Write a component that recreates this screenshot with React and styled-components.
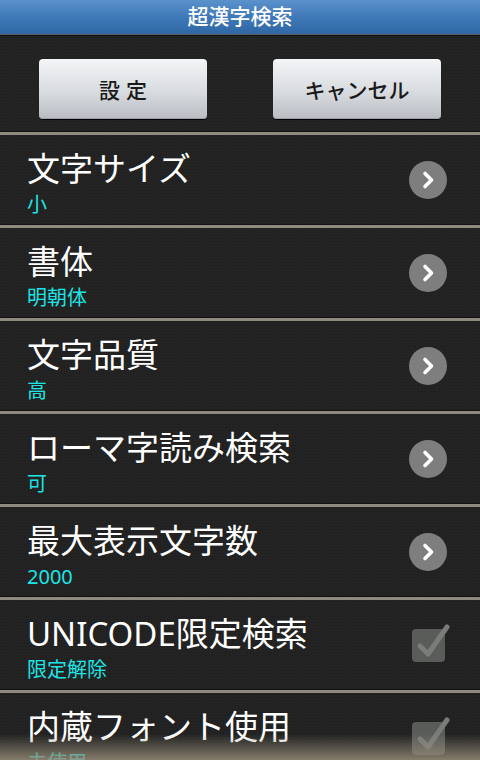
import styled, { createGlobalStyle } from "styled-components";

const GlobalStyle = createGlobalStyle`
  html, body {
    margin: 0;
    padding: 0;
    background: #1f201f;
  }
  body {
    font-family: "Noto Sans", "Noto Sans CJK JP", sans-serif;
  }
`;

const items = [
  { title: "文字サイズ", value: "小", kind: "arrow" },
  { title: "書体", value: "明朝体", kind: "arrow" },
  { title: "文字品質", value: "高", kind: "arrow" },
  { title: "ローマ字読み検索", value: "可", kind: "arrow" },
  { title: "最大表示文字数", value: "2000", kind: "arrow" },
  { title: "UNICODE限定検索", value: "限定解除", kind: "check" },
  { title: "内蔵フォント使用", value: "未使用", kind: "check" },
];

function App() {
  return (
    <Screen>
      <GlobalStyle />
      <TitleBar>超漢字検索</TitleBar>
      <ButtonBar>
        <ActionButton $spaced>設定</ActionButton>
        <ActionButton>キャンセル</ActionButton>
      </ButtonBar>
      {items.map((item) => (
        <Row key={item.title}>
          <Texts>
            <RowTitle>{item.title}</RowTitle>
            <RowValue>{item.value}</RowValue>
          </Texts>
          {item.kind === "arrow" ? <ArrowIcon /> : <CheckIcon />}
        </Row>
      ))}
      <BottomFade />
    </Screen>
  );
}
export default App;

function ArrowIcon() {
  return (
    <Circle>
      <svg width="38" height="38" viewBox="0 0 38 38">
        <path
          d="M16 12.5 L22.5 19 L16 25.5"
          fill="none"
          stroke="#fff"
          strokeWidth="3.6"
          strokeLinecap="round"
          strokeLinejoin="round"
        />
      </svg>
    </Circle>
  );
}

function CheckIcon() {
  return (
    <CheckWrap>
      <svg width="44" height="44" viewBox="0 0 44 44">
        <rect x="4" y="9" width="33" height="33" rx="4" fill="#5a5c5a" />
        <path
          d="M12 26 L20 34 L39 7"
          fill="none"
          stroke="#7a7c7a"
          strokeWidth="5"
          strokeLinecap="round"
          strokeLinejoin="round"
        />
      </svg>
    </CheckWrap>
  );
}

const Screen = styled.div`
  position: relative;
  width: 480px;
  height: 760px;
  overflow: hidden;
  background-color: #222322;
  background-image: radial-gradient(rgba(0, 0, 0, 0.18) 0.6px, transparent 0.8px);
  background-size: 3px 3px;
`;

const TitleBar = styled.div`
  height: 35px;
  display: flex;
  align-items: center;
  justify-content: center;
  background: linear-gradient(#5b92cc, #4079b8 50%, #2f67a4);
  border-bottom: 1px solid #5c5c5c;
  box-shadow: 0 1px 0 #111;
  color: #fff;
  font-size: 21px;
  font-weight: 500;
  line-height: 1;
  padding-bottom: 2px;
  box-sizing: border-box;
`;

const ButtonBar = styled.div`
  display: flex;
  justify-content: space-between;
  padding: 24px 39px 13px;
`;

const ActionButton = styled.div`
  width: 168px;
  height: 60px;
  box-sizing: border-box;
  border-radius: 4px;
  background: linear-gradient(#f3f5f7, #d8dbdf 55%, #b9bdc3);
  box-shadow: 0 1px 0 #000, inset 0 -1px 0 #9da1a7;
  display: flex;
  align-items: center;
  justify-content: center;
  color: #1a1a1a;
  font-family: "Noto Sans CJK JP", sans-serif;
  font-size: 21px;
  font-weight: 500;
  letter-spacing: ${(p) => (p.$spaced ? "6px" : "0")};
  padding-left: ${(p) => (p.$spaced ? "6px" : "0")};
`;

const Row = styled.div`
  height: 90px;
  border-top: 3px solid #8f8a80;
  box-shadow: 0 -1px 0 #121212;
  display: flex;
  align-items: center;
  justify-content: space-between;
  padding: 0 31px 0 27px;
`;

const Texts = styled.div`
  display: flex;
  flex-direction: column;
  gap: 5px;
  padding-top: 6px;
`;

const RowTitle = styled.div`
  color: #fff;
  font-size: 33px;
  line-height: 38px;
  font-family: "Noto Sans", "Noto Sans CJK JP", sans-serif;
`;

const RowValue = styled.div`
  color: #1fe4e6;
  font-size: 20px;
  line-height: 24px;
  font-family: "Noto Sans", "Noto Sans CJK JP", sans-serif;
`;

const Circle = styled.div`
  width: 38px;
  height: 38px;
  border-radius: 50%;
  background: #7e7e7e;
  margin-right: 2px;
  svg {
    display: block;
  }
`;

const CheckWrap = styled.div`
  width: 44px;
  height: 44px;
  margin-right: -3px;
  margin-top: -6px;
  svg {
    display: block;
  }
`;

const BottomFade = styled.div`
  position: absolute;
  left: 0;
  right: 0;
  bottom: 0;
  height: 26px;
  background: linear-gradient(rgba(140, 130, 112, 0), rgba(150, 140, 120, 0.85));
  pointer-events: none;
`;
